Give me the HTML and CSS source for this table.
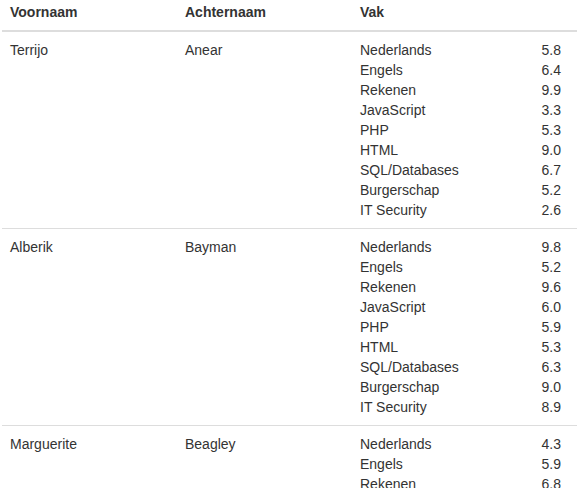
FILE: index.html
```html
<!DOCTYPE html>
<html lang="nl">
<head>
<meta charset="utf-8">
<title>Cijfers</title>
<link rel="stylesheet" href="styles.css">
</head>
<body>
<table class="grades">
  <thead>
    <tr><th class="c-first">Voornaam</th><th class="c-last">Achternaam</th><th>Vak</th></tr>
  </thead>
  <tbody>
    <tr>
      <td>Terrijo</td><td>Anear</td>
      <td>
        <div class="subjects">
          <span>Nederlands</span><span class="num">5.8</span>
          <span>Engels</span><span class="num">6.4</span>
          <span>Rekenen</span><span class="num">9.9</span>
          <span>JavaScript</span><span class="num">3.3</span>
          <span>PHP</span><span class="num">5.3</span>
          <span>HTML</span><span class="num">9.0</span>
          <span>SQL/Databases</span><span class="num">6.7</span>
          <span>Burgerschap</span><span class="num">5.2</span>
          <span>IT Security</span><span class="num">2.6</span>
        </div>
      </td>
    </tr>
    <tr>
      <td>Alberik</td><td>Bayman</td>
      <td>
        <div class="subjects">
          <span>Nederlands</span><span class="num">9.8</span>
          <span>Engels</span><span class="num">5.2</span>
          <span>Rekenen</span><span class="num">9.6</span>
          <span>JavaScript</span><span class="num">6.0</span>
          <span>PHP</span><span class="num">5.9</span>
          <span>HTML</span><span class="num">5.3</span>
          <span>SQL/Databases</span><span class="num">6.3</span>
          <span>Burgerschap</span><span class="num">9.0</span>
          <span>IT Security</span><span class="num">8.9</span>
        </div>
      </td>
    </tr>
    <tr>
      <td>Marguerite</td><td>Beagley</td>
      <td>
        <div class="subjects">
          <span>Nederlands</span><span class="num">4.3</span>
          <span>Engels</span><span class="num">5.9</span>
          <span>Rekenen</span><span class="num">6.8</span>
          <span>JavaScript</span><span class="num">7.1</span>
          <span>PHP</span><span class="num">6.2</span>
          <span>HTML</span><span class="num">8.4</span>
          <span>SQL/Databases</span><span class="num">5.5</span>
          <span>Burgerschap</span><span class="num">7.7</span>
          <span>IT Security</span><span class="num">6.0</span>
        </div>
      </td>
    </tr>
  </tbody>
</table>
</body>
</html>
```
FILE: styles.css
```css
html, body {
  margin: 0;
  padding: 0;
  background: #fff;
}
body {
  font-family: "Liberation Sans", Arial, Helvetica, sans-serif;
  font-size: 14px;
  line-height: 20px;
  color: #333;
}
.grades {
  margin-left: 2px;
  width: 575px;
  border-collapse: collapse;
  border-spacing: 0;
  table-layout: fixed;
}
.grades th,
.grades td {
  text-align: left;
  vertical-align: top;
  padding: 8px;
}
.grades th {
  font-weight: bold;
  padding-top: 2px;
  border-bottom: 2px solid #ddd;
}
.grades .c-first,
.grades .c-last {
  width: 159px;
}
.grades tbody td {
  border-top: 1px solid #ddd;
}
.subjects {
  display: grid;
  grid-template-columns: 1fr auto;
  padding-right: 8px;
}
.subjects .num {
  text-align: right;
}
```
